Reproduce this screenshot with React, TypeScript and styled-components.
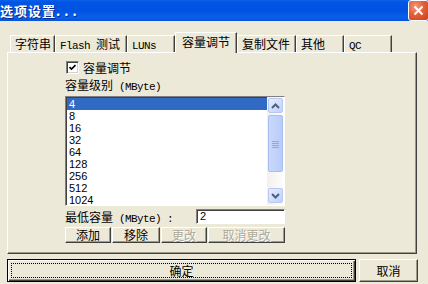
import type { ReactNode } from 'react';
import styled, { createGlobalStyle } from 'styled-components';

const cjk = '"Noto Sans CJK SC", "Liberation Sans", sans-serif';
const mono = '"Liberation Mono", "Noto Sans CJK SC", monospace';
const sans = '"Liberation Sans", Arial, sans-serif';

const GlobalStyle = createGlobalStyle`
  html, body {
    margin: 0;
    padding: 0;
    background: #ece9d8;
  }
`;

const SIZES = ['4', '8', '16', '32', '64', '128', '256', '512', '1024'];

const Window = styled.div`
  width: 428px;
  height: 284px;
  overflow: hidden;
  background: #ece9d8;
  display: flex;
  flex-direction: column;
  font-family: ${cjk};
  font-size: 12px;
  color: #000;
`;

const TitleBar = styled.div`
  height: 21px;
  flex: none;
  display: flex;
  align-items: center;
  justify-content: space-between;
  background: linear-gradient(to bottom, #0b61e8 0%, #0055e5 12%, #0053e1 50%, #0a5fea 85%, #0850d6 100%);
`;

const Title = styled.span`
  color: #fff;
  font-weight: bold;
  font-size: 13px;
  line-height: 21px;
  letter-spacing: 1px;
  text-shadow: 1px 1px 0 #0b2a8a;
  white-space: nowrap;
`;

const Dots = styled.span`
  letter-spacing: 4px;
`;

const CloseButton = styled.div`
  width: 21px;
  height: 21px;
  box-sizing: border-box;
  margin-right: -1px;
  border: 1px solid #fff;
  border-radius: 3px;
  background: radial-gradient(circle at 35% 30%, #f29a7c 0%, #e1603a 45%, #c8401a 100%);
  display: flex;
  align-items: center;
  justify-content: center;
`;

const Body = styled.div`
  flex: 1;
  display: flex;
  flex-direction: column;
  padding: 11px 11px 0 7px;
`;

const TabStrip = styled.div`
  height: 20px;
  display: flex;
  align-items: flex-end;
  padding-left: 3px;
`;

const Tab = styled.div<{ $w: number; $active?: boolean }>`
  width: ${p => p.$w}px;
  height: ${p => (p.$active ? 21 : 17)}px;
  margin-bottom: ${p => (p.$active ? -1 : 0)}px;
  position: relative;
  z-index: ${p => (p.$active ? 1 : 0)};
  box-sizing: border-box;
  flex: none;
  border-top: 1px solid #fff;
  border-left: 1px solid #fff;
  border-right: 1px solid #404040;
  box-shadow: inset -1px 0 0 #9d9a8c;
  background: #ece9d8;
  padding-left: ${p => (p.$active ? 6 : 4)}px;
  line-height: ${p => (p.$active ? 17 : 16)}px;
  white-space: nowrap;
`;

const Latin = styled.span`
  font-family: ${mono};
  font-size: 11px;
  letter-spacing: -0.6px;
`;

const Panel = styled.div`
  height: 202px;
  box-sizing: border-box;
  border-top: 1px solid #fff;
  border-left: 1px solid #fff;
  border-right: 1px solid #404040;
  border-bottom: 1px solid #404040;
  box-shadow: inset -1px -1px 0 #9d9a8c;
  padding: 8px 0 0 57px;
  display: flex;
  flex-direction: column;
`;

const CheckRow = styled.div`
  height: 13px;
  display: flex;
  align-items: center;
  gap: 4px;
  padding-left: 1px;
  line-height: 13px;
`;

const CheckBox = styled.div`
  width: 13px;
  height: 13px;
  box-sizing: border-box;
  background: #fff;
  border-top: 1px solid #808080;
  border-left: 1px solid #808080;
  border-right: 1px solid #fff;
  border-bottom: 1px solid #fff;
  box-shadow: inset 1px 1px 0 #404040, inset -1px -1px 0 #d4d0c8;
  display: flex;
  align-items: center;
  justify-content: center;
`;

const FieldLabel = styled.div`
  height: 14px;
  margin-top: 4px;
  line-height: 14px;
  white-space: nowrap;
`;

const ListBox = styled.div`
  width: 220px;
  height: 110px;
  margin-top: 4px;
  box-sizing: border-box;
  border-top: 1px solid #808080;
  border-left: 1px solid #808080;
  border-right: 1px solid #fff;
  border-bottom: 1px solid #fff;
  box-shadow: inset 1px 1px 0 #404040;
  background: #fff;
  display: flex;
  overflow: hidden;
`;

const Items = styled.div`
  flex: 1;
  padding: 1px 0 0 1px;
  overflow: hidden;
`;

const Item = styled.div<{ $selected?: boolean }>`
  height: 12px;
  line-height: 12px;
  padding-left: 2px;
  font-family: ${sans};
  font-size: 11px;
  background: ${p => (p.$selected ? '#316ac5' : 'transparent')};
  color: ${p => (p.$selected ? '#fff' : '#000')};
`;

const ScrollBar = styled.div`
  width: 17px;
  flex: none;
  box-sizing: border-box;
  padding: 1px 1px 2px 1px;
  background: linear-gradient(to right, #f3f1ec, #fefefe);
  display: flex;
  flex-direction: column;
`;

const ScrollButton = styled.div`
  height: 15px;
  box-sizing: border-box;
  border: 1px solid #b7c9f2;
  border-radius: 2px;
  background: linear-gradient(to bottom right, #e7eefd, #bfd1fa);
  display: flex;
  align-items: center;
  justify-content: center;
`;

const Thumb = styled.div`
  height: 57px;
  margin-top: 2px;
  box-sizing: border-box;
  border: 1px solid #aabcf0;
  border-radius: 2px;
  background: linear-gradient(to right, #c9d8fc, #b9cdfa);
  display: flex;
  align-items: center;
  justify-content: center;
`;

const Spacer = styled.div`
  flex: 1;
`;

const MinRow = styled.div`
  width: 220px;
  height: 15px;
  margin-top: 3px;
  display: flex;
  align-items: center;
  justify-content: space-between;
  white-space: nowrap;
`;

const TextInput = styled.div`
  width: 89px;
  height: 15px;
  box-sizing: border-box;
  border-top: 1px solid #808080;
  border-left: 1px solid #808080;
  border-right: 1px solid #fff;
  border-bottom: 1px solid #fff;
  box-shadow: inset 1px 1px 0 #404040;
  background: #fff;
  padding-left: 3px;
  font-family: ${sans};
  font-size: 11px;
  line-height: 13px;
`;

const ButtonRow = styled.div`
  width: 220px;
  height: 16px;
  margin-top: 3px;
  display: flex;
  gap: 1px;
`;

const SmallButton = styled.div<{ $w: number; $disabled?: boolean }>`
  width: ${p => p.$w}px;
  flex: none;
  box-sizing: border-box;
  border-top: 1px solid #fff;
  border-left: 1px solid #fff;
  border-right: 1px solid #404040;
  border-bottom: 1px solid #404040;
  box-shadow: inset -1px -1px 0 #9d9a8c;
  text-align: center;
  line-height: 14px;
  color: ${p => (p.$disabled ? '#aca899' : '#000')};
  text-shadow: ${p => (p.$disabled ? '1px 1px 0 #fff' : 'none')};
`;

const Footer = styled.div`
  height: 23px;
  margin-top: 5px;
  display: flex;
  gap: 3px;
`;

const DialogButton = styled.div<{ $w: number; $default?: boolean }>`
  width: ${p => p.$w}px;
  flex: none;
  position: relative;
  box-sizing: border-box;
  border: 1px solid ${p => (p.$default ? '#000' : '#ece9d8')};
  box-shadow: inset 1px 1px 0 #fff, inset -1px -1px 0 #404040, inset -2px -2px 0 #9d9a8c;
  ${p => (p.$default ? '' : 'border-top-color: #fff; border-left-color: #fff; border-right-color: #404040; border-bottom-color: #404040; box-shadow: inset -1px -1px 0 #9d9a8c;')}
  text-align: center;
  line-height: 21px;

  &::after {
    content: '';
    display: ${p => (p.$default ? 'block' : 'none')};
    position: absolute;
    inset: 3px;
    border: 1px dotted #000;
  }
`;

const tabs: { label: ReactNode; width: number; active?: boolean }[] = [
  { label: '字符串', width: 45 },
  { label: <><Latin>Flash </Latin>测试</>, width: 72 },
  { label: <Latin>LUNs</Latin>, width: 48 },
  { label: '容量调节', width: 62, active: true },
  { label: '复制文件', width: 59 },
  { label: '其他', width: 48 },
  { label: <Latin>QC</Latin>, width: 48 },
];

const Chevron = ({ up }: { up?: boolean }) => (
  <svg width="9" height="6" viewBox="0 0 9 6">
    <path
      d={up ? 'M1 5 L4.5 1.5 L8 5' : 'M1 1 L4.5 4.5 L8 1'}
      fill="none"
      stroke="#4d6185"
      strokeWidth="2"
    />
  </svg>
);

export default function App() {
  return (
    <>
      <GlobalStyle />
      <Window>
        <TitleBar>
          <Title>选项设置<Dots>...</Dots></Title>
          <CloseButton>
            <svg width="11" height="11" viewBox="0 0 11 11">
              <path d="M1.5 1.5 L9.5 9.5 M9.5 1.5 L1.5 9.5" stroke="#fff" strokeWidth="2" />
            </svg>
          </CloseButton>
        </TitleBar>
        <Body>
          <TabStrip>
            {tabs.map((t, i) => (
              <Tab key={i} $w={t.width} $active={t.active}>
                {t.label}
              </Tab>
            ))}
          </TabStrip>
          <Panel>
            <CheckRow>
              <CheckBox>
                <svg width="7" height="7" viewBox="0 0 7 7">
                  <path d="M0.5 3 L2.5 5 L6.5 1" fill="none" stroke="#000" strokeWidth="1.6" />
                </svg>
              </CheckBox>
              容量调节
            </CheckRow>
            <FieldLabel>
              容量级别<Latin> (MByte)</Latin>
            </FieldLabel>
            <ListBox>
              <Items>
                {SIZES.map((s, i) => (
                  <Item key={s} $selected={i === 0}>
                    {s}
                  </Item>
                ))}
              </Items>
              <ScrollBar>
                <ScrollButton>
                  <Chevron up />
                </ScrollButton>
                <Thumb>
                  <svg width="7" height="8" viewBox="0 0 7 8">
                    <path d="M0 1.5 H7 M0 3.5 H7 M0 5.5 H7 M0 7.5 H7" stroke="#8fa8e6" strokeWidth="1" />
                  </svg>
                </Thumb>
                <Spacer />
                <ScrollButton>
                  <Chevron />
                </ScrollButton>
              </ScrollBar>
            </ListBox>
            <MinRow>
              <span>
                最低容量<Latin> (MByte) :</Latin>
              </span>
              <TextInput>2</TextInput>
            </MinRow>
            <ButtonRow>
              <SmallButton $w={46}>添加</SmallButton>
              <SmallButton $w={48}>移除</SmallButton>
              <SmallButton $w={46} $disabled>更改</SmallButton>
              <SmallButton $w={77} $disabled>取消更改</SmallButton>
            </ButtonRow>
          </Panel>
          <Footer>
            <DialogButton $w={349} $default>确定</DialogButton>
            <DialogButton $w={59}>取消</DialogButton>
          </Footer>
        </Body>
      </Window>
    </>
  );
}
